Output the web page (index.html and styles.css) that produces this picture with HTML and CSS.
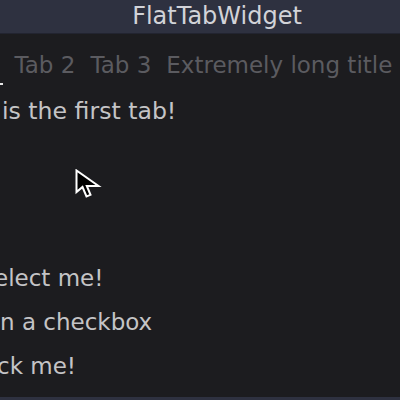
FILE: index.html
```html
<!DOCTYPE html>
<html lang="en">
  <head>
    <meta charset="UTF-8" />
    <meta name="viewport" content="width=device-width, initial-scale=1.0" />
    <title>FlatTabWidget</title>
    <link rel="stylesheet" href="styles.css">
  </head>
  <body>
    <div class="window">
      <div class="titlebar">FlatTabWidget</div>
      <div class="main">
        <div class="tabs">
          <div class="tab active"><span></span></div>
          <div class="tab"><span>Tab 2</span></div>
          <div class="tab"><span>Tab 3</span></div>
          <div class="tab"><span>Extremely long title</span></div>
        </div>
        <div class="page">
          <p class="label">is the first tab!</p>
          <p class="radio">elect me!</p>
          <p class="check">n a checkbox</p>
          <p class="button">ck me!</p>
        </div>
      </div>
      <div class="bottombar"></div>
      <svg class="cursor" width="28" height="32" viewBox="0 0 28 32">
        <path d="M1.5 1.5 L1.5 23 L7.5 18 L11.5 27.5 L15.5 25.8 L11.8 17 L23.5 17 Z" fill="#000" stroke="#fff" stroke-width="2" stroke-linejoin="miter" />
      </svg>
    </div>
  </body>
</html>
```

FILE: styles.css
```css
* {
  box-sizing: border-box;
}
body {
  margin: 0;
  background-color: #1c1c1f;
  font-family: "DejaVu Sans", sans-serif;
  overflow: hidden;
}
.window {
  position: relative;
  width: 400px;
  height: 400px;
  display: flex;
  flex-direction: column;
  overflow: hidden;
}
.titlebar {
  height: 34px;
  background-color: #2e3140;
  color: #d2d3d8;
  font-size: 24px;
  line-height: 33px;
  text-align: center;
  padding-left: 34px;
  border-bottom: 1px solid #222430;
}
.main {
  flex: 1;
}
.tabs {
  display: flex;
  white-space: nowrap;
  margin-top: 18px;
}
.tab {
  padding: 0 7.5px;
  font-size: 23px;
  color: #5b5b60;
}
.tab span {
  display: block;
  line-height: 27px;
  padding-bottom: 4px;
  border-bottom: 2px solid transparent;
}
.tab.active {
  padding: 0;
  margin-right: 4px;
}
.tab.active span {
  width: 3px;
  height: 33px;
  border-bottom-color: #e6e6e6;
}
.page {
  color: #c4c4c6;
  font-size: 23px;
}
.page p {
  margin: 0;
  white-space: nowrap;
  line-height: 44px;
}
.label {
  margin-top: 4px !important;
  padding-left: 2px;
  font-size: 23.6px;
}
.radio {
  margin-top: 123px !important;
  margin-left: -6px !important;
}
.button {
  margin-left: -3px !important;
}
.bottombar {
  height: 3px;
  background-color: #2e3140;
}
.cursor {
  position: absolute;
  left: 75px;
  top: 169px;
}
```
